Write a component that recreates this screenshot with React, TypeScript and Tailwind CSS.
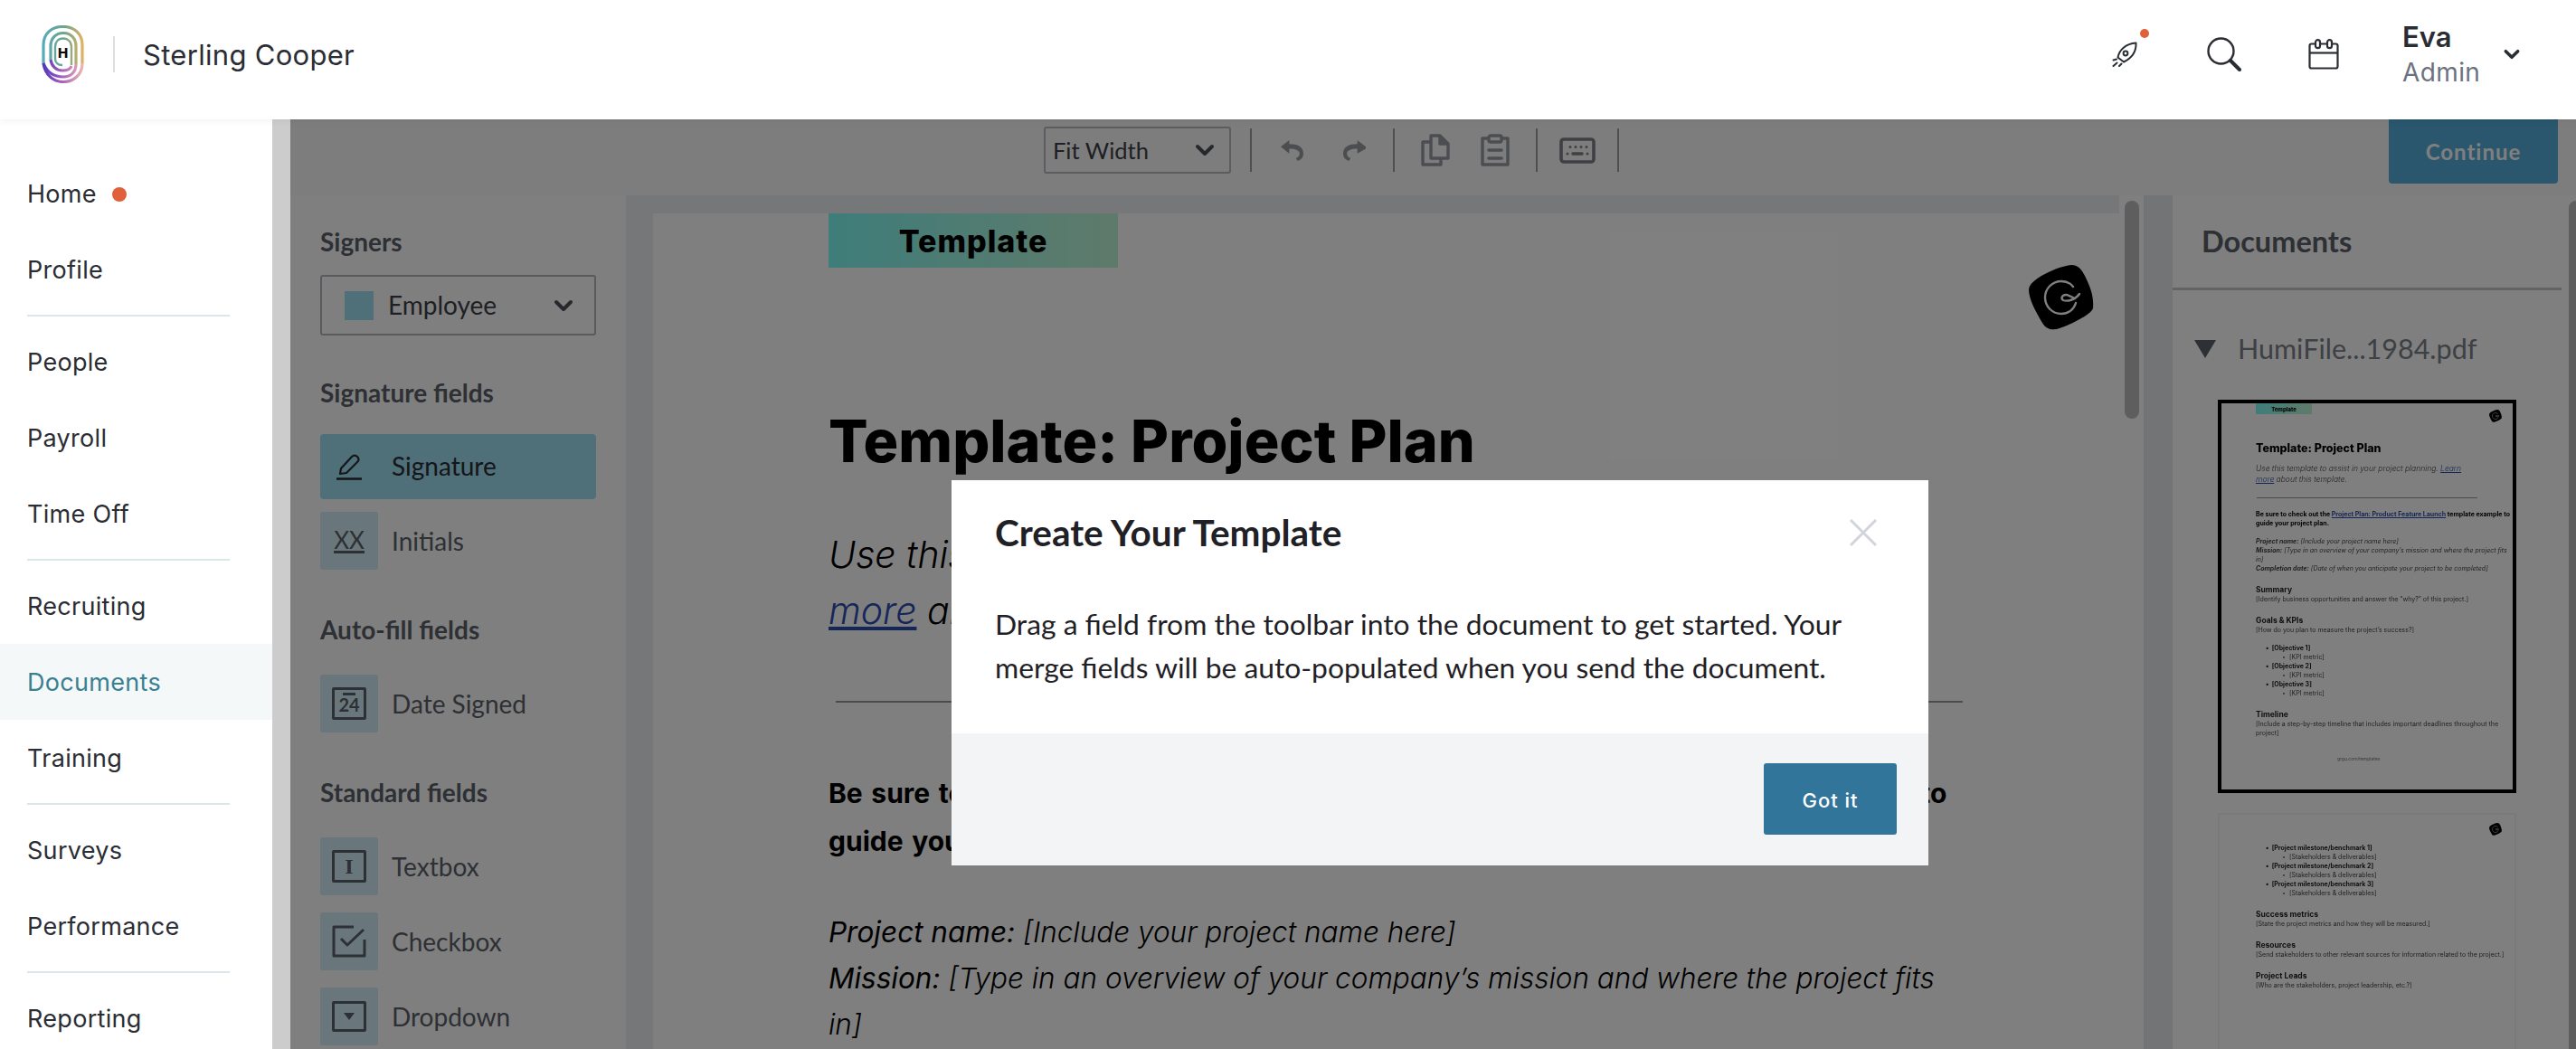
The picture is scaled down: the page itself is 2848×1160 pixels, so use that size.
import React from 'react';

const inter = "font-['Inter',sans-serif]";
const lato = "font-['Lato',sans-serif]";

const navGroups = [
  ['Home', 'Profile'],
  ['People', 'Payroll', 'Time Off'],
  ['Recruiting', 'Documents', 'Training'],
  ['Surveys', 'Performance'],
  ['Reporting'],
];

const Logo = () => (
  <svg width="47" height="64" viewBox="0 0 47 64" fill="none" strokeWidth="3.200">
    <defs>
      <linearGradient id="logoTop" gradientUnits="userSpaceOnUse" x1="0" y1="0" x2="47" y2="0">
        <stop offset="0" stopColor="#55abbc" />
        <stop offset="0.55" stopColor="#6fa58a" />
        <stop offset="1" stopColor="#e8b262" />
      </linearGradient>
      <linearGradient id="logoLow" gradientUnits="userSpaceOnUse" x1="0" y1="0" x2="47" y2="0">
        <stop offset="0" stopColor="#4636bd" />
        <stop offset="0.45" stopColor="#a35cbf" />
        <stop offset="1" stopColor="#f0bcae" />
      </linearGradient>
    </defs>
    <path d="M2 42V22C2 9 11 1.500 23.500 1.500S45 9 45 22v20" stroke="url(#logoTop)" />
    <path d="M45 42c0 12-9 20.500-21 20.500C13 62.500 4 55 2 42" stroke="url(#logoLow)" />
    <path d="M10 38V23c0-9 6-14.500 14-14.500S38 14 38 23v20" stroke="url(#logoTop)" />
    <path d="M38 43c0 9-6 14-14 14-10 0-18-5-22-15" stroke="url(#logoLow)" />
    <path d="M10 38c1 7 6 12 13 12 6 0 9-2 10-5" stroke="url(#logoLow)" />
    <path d="M33 44V24c0-6-4-9.500-9-9.500-6 0-9 4-9 9.500v13c0 4 3 7 8 7" stroke="url(#logoTop)" strokeWidth="2.400" />
    <text x="23.500" y="35.500" textAnchor="middle" fontSize="15" fontWeight="800" fontFamily="Inter, sans-serif" fill="#0b0b0b">H</text>
  </svg>
);

const RocketIcon = () => (
  <svg width="28" height="28" viewBox="0 0 28 28" fill="none" stroke="#2a2d33" strokeWidth="2" strokeLinecap="round" strokeLinejoin="round">
    <path d="M6.500 17.500C8 9 15 2.500 26.500 1.500c.5 10-5 17-13.500 21l-6.500-5Z" />
    <circle cx="15" cy="13" r="2.400" />
    <path d="M1.500 20.500l3.500-1M1.500 27l4-3.500M8 27l2.500-2.500" />
  </svg>
);

const SearchIcon = () => (
  <svg width="38" height="38" viewBox="0 0 38 38" fill="none" stroke="#2a2d33" strokeLinecap="round">
    <circle cx="15.500" cy="15.500" r="14" strokeWidth="2.400" />
    <path d="M26 26l10 10" strokeWidth="4" />
  </svg>
);

const CalendarIcon = () => (
  <svg width="34" height="34" viewBox="0 0 34 34" fill="none" stroke="#2a2d33" strokeWidth="2.200" strokeLinejoin="round">
    <rect x="1.500" y="5.500" width="31" height="27" rx="2" />
    <path d="M1.500 15.500h31" />
    <rect x="8" y="1.200" width="5" height="9" rx="2.500" fill="#fff" />
    <rect x="21" y="1.200" width="5" height="9" rx="2.500" fill="#fff" />
  </svg>
);

const Chevron = ({ size = 18, width = 3, color = '#2a2d33' }: { size?: number; width?: number; color?: string }) => (
  <svg width={size} height={size} viewBox="0 0 18 18" fill="none" stroke={color} strokeWidth={width} strokeLinecap="round" strokeLinejoin="round">
    <path d="M3 6l6 6 6-6" />
  </svg>
);

const Divider = () => <div className="h-[48px] w-[2px] bg-[#9a9ea6]" />;

const Toolbar = () => (
  <div className="relative flex h-[84px] shrink-0 items-center bg-[#fafafa] pb-[16px] pl-[833px]">
    <div className={`flex h-[52px] w-[207px] items-center justify-between rounded-[3px] border-2 border-[#b4b8bf] pl-[8px] pr-[15px] text-[25.500px] text-[#3d4148] ${lato}`}>
      <span>Fit Width</span>
      <Chevron size={24} width={3} color="#4b5058" />
    </div>
    <div className="ml-[21px]"><Divider /></div>
    <div className="flex w-[156px] items-center gap-[44px] pl-[32px]">
      <svg width="25" height="23" viewBox="0 0 24 22" fill="#969aa2">
        <path d="M0 7l9-7v4c9 0 15 3 15 10 0 4-2 6-6 8l-2-3c2-1 4-2 4-5 0-3-4-5-11-5v5L0 7Z" />
      </svg>
      <svg width="25" height="23" viewBox="0 0 24 22" fill="#969aa2">
        <path d="M24 7l-9-7v4C6 4 0 7 0 14c0 4 2 6 6 8l2-3c-2-1-4-2-4-5 0-3 4-5 11-5v5l9-5Z" />
      </svg>
    </div>
    <Divider />
    <div className="flex w-[156px] items-center justify-around px-[12px]">
      <svg width="32" height="36" viewBox="0 0 32 36" fill="none" stroke="#969aa2" strokeWidth="3.400" strokeLinejoin="round">
        <path d="M11 2h10l9 9v16H11V2Z" />
        <path d="M21 2v9h9" fill="#969aa2" />
        <path d="M10 9H2v25h20v-6" />
      </svg>
      <svg width="32" height="36" viewBox="0 0 32 36" fill="none" stroke="#969aa2" strokeWidth="3.400" strokeLinejoin="round" strokeLinecap="round">
        <path d="M8 5H2v29h28V5h-6" />
        <rect x="9" y="2" width="14" height="7" rx="2" />
        <path d="M9 18h14M9 27h14" strokeWidth="3.600" />
      </svg>
    </div>
    <Divider />
    <div className="flex w-[88px] items-center justify-center">
      <svg width="40" height="29" viewBox="0 0 40 29" fill="none" stroke="#7c8088">
        <rect x="2" y="2" width="36" height="25" rx="3" strokeWidth="3.600" />
        <path d="M12 10.500h0M18 10.500h0M24 10.500h0M30 10.500h0M9 18h0M31 18h0" strokeWidth="3" strokeLinecap="round" />
        <path d="M15 18h10" strokeWidth="3.400" strokeLinecap="round" />
      </svg>
    </div>
    <Divider />
    <button className={`absolute right-[20px] top-0 h-[71px] w-[187px] rounded-b-[4px] bg-[#54aedc] text-[24px] font-bold tracking-[1px] text-white ${lato}`}>
      Continue
    </button>
  </div>
);

const fieldBox = 'flex h-[64px] w-[64px] shrink-0 items-center justify-center rounded-[2px] bg-[#d3eff8]';

const FieldRow = ({ label, icon }: { label: string; icon: React.ReactNode }) => (
  <div className="flex items-center">
    <div className={fieldBox}>{icon}</div>
    <span className={`ml-[15px] text-[28px] text-[#5b6068] ${lato}`}>{label}</span>
  </div>
);

const heading = `text-[28px] font-bold leading-[34px] text-[#5b6068] ${lato}`;

const SidePanel = () => (
  <div className="flex w-[371px] shrink-0 flex-col bg-white pl-[33px] pr-[33px] pt-[34px]">
    <div className={heading}>Signers</div>
    <div className="mt-[20px] flex h-[67px] items-center justify-between rounded-[3px] border-2 border-[#b0b4bb] pl-[25px] pr-[22px]">
      <div className="flex items-center gap-[16px]">
        <div className="h-[32px] w-[32px] bg-[#9fdff2]" />
        <span className={`pb-[2px] text-[28px] text-[#3d4148] ${lato}`}>Employee</span>
      </div>
      <Chevron size={24} width={3} color="#4b5058" />
    </div>
    <div className={`${heading} mt-[46px]`}>Signature fields</div>
    <div className="mt-[29px] flex h-[72px] items-center rounded-[4px] bg-[#9fdff2]">
      <div className="flex w-[64px] justify-center">
        <svg width="30" height="30" viewBox="0 0 30 30" fill="none" stroke="#2a2d33" strokeWidth="2.200" strokeLinejoin="round">
          <path d="M5 23l1-6L18 4c2-2 4-2 6 0s2 4 0 6L12 22l-7 1Z" />
          <path d="M1 28.500h28" strokeWidth="2.600" />
        </svg>
      </div>
      <span className={`ml-[15px] pb-[2px] text-[28px] text-[#2a2d33] ${lato}`}>Signature</span>
    </div>
    <div className="mt-[14px]">
      <FieldRow
        label="Initials"
        icon={
          <div className="flex w-[34px] flex-col items-center border-b-[3px] border-[#5b6068]">
            <span className={`text-[26px] leading-[24px] text-[#5b6068] ${lato}`}>XX</span>
          </div>
        }
      />
    </div>
    <div className={`${heading} mt-[49px]`}>Auto-fill fields</div>
    <div className="mt-[33px]">
      <FieldRow
        label="Date Signed"
        icon={
          <div className="flex h-[36px] w-[38px] flex-col items-center rounded-[2px] border-[3px] border-[#5b6068]">
            <div className="mt-[3px] h-[3px] w-[14px] bg-[#5b6068]" />
            <span className={`text-[20px] font-bold leading-[20px] text-[#5b6068] ${lato}`}>24</span>
          </div>
        }
      />
    </div>
    <div className={`${heading} mt-[49px]`}>Standard fields</div>
    <div className="mt-[33px] flex flex-col gap-[19px]">
      <FieldRow
        label="Textbox"
        icon={
          <div className="flex h-[36px] w-[38px] items-center justify-center rounded-[2px] border-[3px] border-[#5b6068]">
            <span className="font-['Liberation_Serif',serif] text-[24px] font-bold leading-none text-[#5b6068]">I</span>
          </div>
        }
      />
      <FieldRow
        label="Checkbox"
        icon={
          <svg width="38" height="36" viewBox="0 0 38 36" fill="none" stroke="#5b6068" strokeWidth="3">
            <path d="M24 2H2v32h34V16" strokeLinejoin="round" />
            <path d="M10 15l7 7L35 5" strokeLinejoin="round" />
          </svg>
        }
      />
      <FieldRow
        label="Dropdown"
        icon={
          <div className="flex h-[34px] w-[38px] items-center justify-center rounded-[2px] border-[3px] border-[#5b6068]">
            <div className="h-0 w-0 border-x-[6px] border-t-[8px] border-x-transparent border-t-[#5b6068]" />
          </div>
        }
      />
    </div>
  </div>
);

const GrammarlyBadge = ({ size }: { size: number }) => (
  <svg width={size} height={size} viewBox="0 0 72 72" fill="none">
    <path d="M14 12C25 6 37 1 47 0c7 0 11 4 15 12 7 14 10 24 9 36-2 6-20 16-37 22-8 3-15 1-19-6C8 52 0 38 0 27c1-7 8-11 14-15Z" fill="#000" />
    <path d="M49 24c-3-4-8-6-13-6-10 0-18 8-18 18s8 18 18 18c8 0 14-5 16-12" stroke="#fff" strokeWidth="2.400" strokeLinecap="round" />
    <path d="M56 32c-4 6-13 9-18 7-3-2-1-6 3-6 3 0 7 3 10 4" stroke="#fff" strokeWidth="2.400" strokeLinecap="round" />
  </svg>
);

const docFont = 'font-["Inter",sans-serif]';

const DocumentPage = () => (
  <div className="relative flex-1 overflow-hidden bg-white pl-[194px] text-black">
    <div className="flex h-[60px] w-[320px] items-center justify-center bg-gradient-to-r from-[#7cfaf4] to-[#bdf5d5]">
      <span className={`text-[34px] font-extrabold tracking-[1px] ${docFont}`}>Template</span>
    </div>
    <div className="absolute right-[28px] top-[57px]"><GrammarlyBadge size={72} /></div>
    <div className={`mt-[156px] whitespace-nowrap text-[64.500px] font-extrabold leading-[72px] ${docFont}`}>Template: Project Plan</div>
    <div className={`mt-[58px] whitespace-nowrap text-[41px] font-light italic leading-[62px] ${docFont}`}>
      Use this template to assist in your project planning. <span className="text-[#2b4fb3] underline">Learn</span>
      <br />
      <span className="text-[#2b4fb3] underline">more</span> about this template.
    </div>
    <div className="ml-[8px] mt-[69px] h-[2px] w-[1246px] bg-[#999]" />
    <div className={`mt-[74px] whitespace-nowrap text-[30px] font-bold leading-[53px] [word-spacing:2.500px] ${docFont}`}>
      Be sure to check out the <span className="text-[#2b4fb3] underline">Project Plan: Product Feature Launch</span> template example to
      <br />
      guide your project plan.
    </div>
    <div className={`mt-[48px] w-[1246px] text-[31.500px] font-light italic leading-[51px] ${docFont}`}>
      <div><b>Project name:</b> [Include your project name here]</div>
      <div><b>Mission:</b> [Type in an overview of your company’s mission and where the project fits in]</div>
    </div>
  </div>
);

const ThumbLine = ({ children, className = '' }: { children: React.ReactNode; className?: string }) => (
  <div className={`h-[10px] whitespace-nowrap text-[7px] leading-[10px] ${className}`}>{children}</div>
);

const ThumbHeading = ({ children }: { children: React.ReactNode }) => (
  <div className="mt-[12px] text-[8.500px] font-bold leading-[12px] text-[#222]">{children}</div>
);

const ThumbOne = () => (
  <div className={`relative h-[435px] w-[330px] shrink-0 border-4 border-black bg-white pl-[38px] ${docFont} text-[#444] blur-[0.7px]`}>
    <div className="flex h-[12px] w-[62px] items-center justify-center bg-gradient-to-r from-[#7cfaf4] to-[#bdf5d5] text-[6px] font-extrabold text-black">Template</div>
    <div className="absolute right-[12px] top-[7px]"><GrammarlyBadge size={14} /></div>
    <div className="mt-[30px] text-[12.500px] font-extrabold leading-[16px] text-black">Template: Project Plan</div>
    <div className="mt-[8px] whitespace-nowrap text-[8.500px] font-light italic leading-[12px]">
      Use this template to assist in your project planning. <span className="text-[#2b4fb3] underline">Learn</span>
      <br />
      <span className="text-[#2b4fb3] underline">more</span> about this template.
    </div>
    <div className="ml-[1px] mt-[14px] h-px w-[244px] bg-[#999]" />
    <ThumbLine className="mt-[13px] font-bold text-black">Be sure to check out the <span className="text-[#2b4fb3] underline">Project Plan: Product Feature Launch</span> template example to</ThumbLine>
    <ThumbLine className="font-bold text-black">guide your project plan.</ThumbLine>
    <ThumbLine className="mt-[10px] italic"><b>Project name:</b> [Include your project name here]</ThumbLine>
    <ThumbLine className="italic"><b>Mission:</b> [Type in an overview of your company’s mission and where the project fits</ThumbLine>
    <ThumbLine className="italic">in]</ThumbLine>
    <ThumbLine className="italic"><b>Completion date:</b> [Date of when you anticipate your project to be completed]</ThumbLine>
    <ThumbHeading>Summary</ThumbHeading>
    <ThumbLine>[Identify business opportunities and answer the “why?” of this project.]</ThumbLine>
    <ThumbHeading>Goals &amp; KPIs</ThumbHeading>
    <ThumbLine>[How do you plan to measure the project’s success?]</ThumbLine>
    <div className="mt-[10px] pl-[11px]">
      <ThumbLine className="font-bold text-[#222]">• &nbsp;[Objective 1]</ThumbLine>
      <ThumbLine className="pl-[18px]">◦ &nbsp;[KPI metric]</ThumbLine>
      <ThumbLine className="font-bold text-[#222]">• &nbsp;[Objective 2]</ThumbLine>
      <ThumbLine className="pl-[18px]">◦ &nbsp;[KPI metric]</ThumbLine>
      <ThumbLine className="font-bold text-[#222]">• &nbsp;[Objective 3]</ThumbLine>
      <ThumbLine className="pl-[18px]">◦ &nbsp;[KPI metric]</ThumbLine>
    </div>
    <ThumbHeading>Timeline</ThumbHeading>
    <ThumbLine>[Include a step-by-step timeline that includes important deadlines throughout the</ThumbLine>
    <ThumbLine>project]</ThumbLine>
    <div className="mt-[20px] pl-[90px] text-[5px] text-[#777]">grgu.com/templates</div>
  </div>
);

const ThumbTwo = () => (
  <div className={`relative mt-[22px] h-[435px] w-[330px] shrink-0 border-2 border-[#f4f4f4] bg-white pl-[40px] pt-[32px] ${docFont} text-[#444] blur-[0.7px]`}>
    <div className="absolute right-[14px] top-[9px]"><GrammarlyBadge size={14} /></div>
    <div className="pl-[11px]">
      <ThumbLine className="font-bold text-[#222]">• &nbsp;[Project milestone/benchmark 1]</ThumbLine>
      <ThumbLine className="pl-[18px]">◦ &nbsp;[Stakeholders &amp; deliverables]</ThumbLine>
      <ThumbLine className="font-bold text-[#222]">• &nbsp;[Project milestone/benchmark 2]</ThumbLine>
      <ThumbLine className="pl-[18px]">◦ &nbsp;[Stakeholders &amp; deliverables]</ThumbLine>
      <ThumbLine className="font-bold text-[#222]">• &nbsp;[Project milestone/benchmark 3]</ThumbLine>
      <ThumbLine className="pl-[18px]">◦ &nbsp;[Stakeholders &amp; deliverables]</ThumbLine>
    </div>
    <ThumbHeading>Success metrics</ThumbHeading>
    <ThumbLine>[State the project metrics and how they will be measured.]</ThumbLine>
    <ThumbHeading>Resources</ThumbHeading>
    <ThumbLine>[Send stakeholders to other relevant sources for information related to the project.]</ThumbLine>
    <ThumbHeading>Project Leads</ThumbHeading>
    <ThumbLine>[Who are the stakeholders, project leadership, etc.?]</ThumbLine>
  </div>
);

const DocumentsPanel = () => (
  <div className="flex w-[430px] shrink-0 flex-col overflow-hidden bg-white">
    <div className={`flex h-[105px] shrink-0 items-center border-b-[3px] border-[#c4c6ca] pl-[32px] text-[32.500px] font-bold text-[#5b6068] ${lato}`}>
      Documents
    </div>
    <div className="flex h-[121px] shrink-0 items-center pl-[24px] pt-[8px]">
      <div className="h-0 w-0 border-x-[12px] border-t-[20px] border-x-transparent border-t-[#5b6068]" />
      <span className={`ml-[24px] text-[30.500px] text-[#7b8088] ${lato}`}>HumiFile...1984.pdf</span>
    </div>
    <div className="flex flex-col pl-[50px]">
      <ThumbOne />
      <ThumbTwo />
    </div>
  </div>
);

const Workspace = () => (
  <div className="flex min-h-0 flex-1">
    <SidePanel />
    <div className="flex min-w-0 flex-1 bg-[#eceef2]">
      <div className="flex flex-1 flex-col pl-[30px] pt-[20px]">
        <DocumentPage />
      </div>
      <div className="flex w-[27px] shrink-0 justify-center bg-white pt-[6px]">
        <div className="h-[241px] w-[16px] rounded-full bg-[#bcbcbc]" />
      </div>
      <div className="w-[32px] shrink-0 bg-[#e6e8ec]" />
    </div>
    <DocumentsPanel />
    <div className="flex w-[16px] shrink-0 justify-end bg-white pt-[6px]">
      <div className="w-[8px] rounded-tl-full bg-[#bcbcbc]" />
    </div>
  </div>
);

const Modal = () => (
  <div className="absolute left-[731px] top-[399px] flex h-[426px] w-[1080px] flex-col bg-white">
    <div className="relative flex-1 px-[48px] pt-[36px]">
      <h2 className={`text-[40.500px] font-bold leading-[44px] text-[#1f2126] ${lato}`}>Create Your Template</h2>
      <svg className="absolute right-[56px] top-[42px]" width="32" height="32" viewBox="0 0 32 32" fill="none" stroke="#d1d5db" strokeWidth="3">
        <path d="M2 2l28 28M30 2L2 30" />
      </svg>
      <p className={`mt-[55px] w-[960px] text-[31.800px] leading-[48px] text-[#1f2126] ${lato}`}>
        Drag a field from the toolbar into the document to get started. Your merge fields will be auto-populated when you send the document.
      </p>
    </div>
    <div className="flex h-[146px] items-start justify-end bg-[#f3f4f6] pr-[35px] pt-[33px]">
      <button className={`h-[79px] w-[147px] rounded-[3px] bg-[#32759b] pt-[4px] text-[22px] font-medium tracking-[1px] text-white ${inter}`}>Got it</button>
    </div>
  </div>
);

const Header = () => (
  <header className="relative z-10 flex h-[132px] shrink-0 items-center bg-white pb-[12px] pl-[46px] pr-[61px] shadow-[0_2px_8px_rgba(0,0,0,0.05)]">
    <Logo />
    <div className="ml-[32px] h-[40px] w-[2px] bg-[#dcdee0]" />
    <span className={`ml-[31px] pt-[2px] text-[31px] tracking-[0.3px] text-[#2a2d33] ${inter}`}>Sterling Cooper</span>
    <div className="ml-auto flex items-center">
      <div className="relative">
        <RocketIcon />
        <span className="absolute -right-[13px] -top-[14px] h-[10px] w-[10px] rounded-full bg-[#e0603a]" />
      </div>
      <div className="ml-[77px]"><SearchIcon /></div>
      <div className="ml-[74px]"><CalendarIcon /></div>
      <div className={`ml-[70px] flex w-[111px] flex-col ${inter}`}>
        <span className="text-[31px] font-semibold leading-[40px] text-[#2a2d33]">Eva</span>
        <span className="text-[28px] leading-[38px] tracking-[0.4px] text-[#6b7280]">Admin</span>
      </div>
      <Chevron size={20} width={3.200} />
    </div>
  </header>
);

const Sidebar = () => (
  <nav className={`flex w-[321px] shrink-0 border-r-[20px] border-[#cccccc] bg-white pt-[40px] ${inter}`}>
    <div className="flex w-full flex-col">
      {navGroups.map((group, i) => (
        <div key={i}>
          {i > 0 && (
            <div className="flex h-[18px] items-center pl-[30px]">
              <div className="h-[2px] w-[224px] bg-[#d9e7e9]" />
            </div>
          )}
          {group.map((item) => (
            <div
              key={item}
              className={`flex h-[84px] items-center pl-[30px] pt-[2px] text-[27px] tracking-[0.3px] ${
                item === 'Documents' ? 'bg-[#f4f8f9] text-[#3a8091]' : 'text-[#2a2d33]'
              }`}
            >
              {item}
              {item === 'Home' && <span className="ml-[17px] h-[16px] w-[16px] rounded-full bg-[#e0603a]" />}
            </div>
          ))}
        </div>
      ))}
    </div>
  </nav>
);

export default function App() {
  return (
    <div className="flex h-[1160px] w-[2848px] flex-col overflow-hidden bg-white">
      <Header />
      <div className="flex min-h-0 flex-1">
        <Sidebar />
        <main className="relative flex min-w-0 flex-1 flex-col">
          <Toolbar />
          <Workspace />
          <div className="absolute inset-0 bg-black/50" />
          <Modal />
        </main>
      </div>
    </div>
  );
}
